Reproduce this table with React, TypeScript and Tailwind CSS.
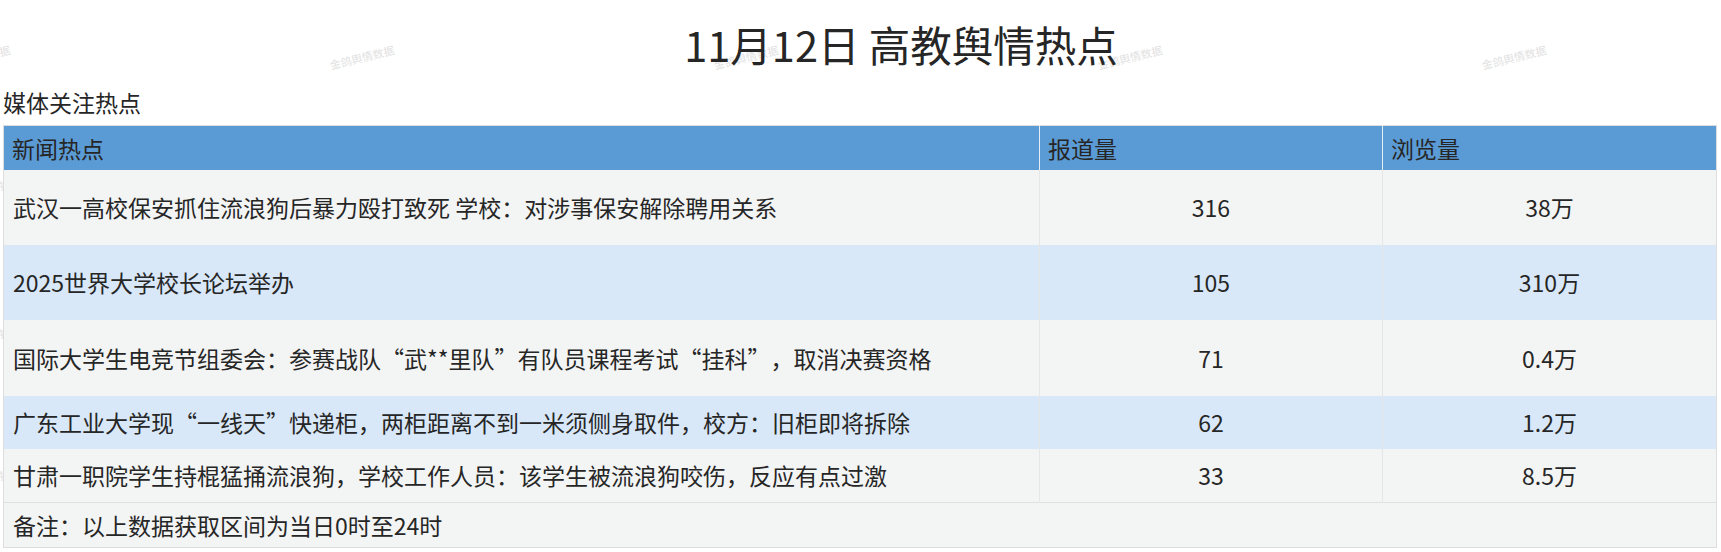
import React from 'react';

const rows = [
  { title: '武汉一高校保安抓住流浪狗后暴力殴打致死 学校：对涉事保安解除聘用关系', reports: '316', views: '38万', h: 'h-[75px]', bg: 'bg-[#f3f4f4]' },
  { title: '2025世界大学校长论坛举办', reports: '105', views: '310万', h: 'h-[75px]', bg: 'bg-[#d9e8f8]' },
  { title: '国际大学生电竞节组委会：参赛战队“武**里队”有队员课程考试“挂科”，取消决赛资格', reports: '71', views: '0.4万', h: 'h-[76px]', bg: 'bg-[#f3f4f4]' },
  { title: '广东工业大学现“一线天”快递柜，两柜距离不到一米须侧身取件，校方：旧柜即将拆除', reports: '62', views: '1.2万', h: 'h-[53px]', bg: 'bg-[#d9e8f8]' },
  { title: '甘肃一职院学生持棍猛捅流浪狗，学校工作人员：该学生被流浪狗咬伤，反应有点过激', reports: '33', views: '8.5万', h: 'h-[54px]', bg: 'bg-[#f3f4f4]' },
];

const marks = [
  { left: -55, top: 52 },
  { left: 329, top: 52 },
  { left: 713, top: 52 },
  { left: 1097, top: 52 },
  { left: 1481, top: 52 },
  { left: -55, top: 186 },
  { left: -55, top: 334 },
  { left: -55, top: 476 },
];

// curly quotes take a full em in the original font
const withWideQuotes = (text: string) =>
  text.split(/([“”])/).map((part, i) =>
    part === '“' ? (
      <span key={i} className="inline-block w-[1em] text-right">
        {part}
      </span>
    ) : part === '”' ? (
      <span key={i} className="inline-block w-[1em] text-left">
        {part}
      </span>
    ) : (
      part
    )
  );

const App: React.FC = () => {
  return (
    <div
      className="relative w-[1721px] h-[552px] bg-white overflow-hidden text-[#262626]"
      style={{ fontFamily: '"Noto Sans CJK SC", "Noto Sans", sans-serif' }}
    >
      {/* watermark */}
      <div className="absolute inset-0 pointer-events-none">
        {marks.map((m, i) => (
          <span
            key={i}
            className="absolute text-[11px] leading-none text-[#e2e2e2] -rotate-[14deg] whitespace-nowrap"
            style={{ left: m.left, top: m.top }}
          >
            金鸽舆情数据
          </span>
        ))}
      </div>

      <div className="relative flex flex-col pt-[20px] pl-[3px] pr-[4px]">
        <h1 className="pl-[82px] text-center text-[41.5px] leading-[48px] font-normal">11月12日 高教舆情热点</h1>
        <div className="mt-[20px] text-[23px] leading-[28px]">媒体关注热点</div>

        <table className="mt-[9px] w-full table-fixed border-collapse border border-[#dddddd] text-[23px] leading-[28px]">
          <colgroup>
            <col className="w-[1036px]" />
            <col className="w-[343px]" />
            <col />
          </colgroup>
          <thead>
            <tr className="h-[44px] bg-[#5b9bd5]">
              <th className="px-[8px] text-left font-normal">新闻热点</th>
              <th className="px-[8px] text-left font-normal border-l border-[#e8eef5]">报道量</th>
              <th className="px-[8px] text-left font-normal border-l border-[#e8eef5]">浏览量</th>
            </tr>
          </thead>
          <tbody>
            {rows.map((r) => (
              <tr key={r.reports} className={r.h + ' ' + r.bg}>
                <td className="px-[9px] text-left">{withWideQuotes(r.title)}</td>
                <td className="px-[8px] text-center border-l border-[#e6e6e6]">{r.reports}</td>
                <td className="px-[8px] text-center border-l border-[#e6e6e6]">{r.views}</td>
              </tr>
            ))}
            <tr className="h-[45px] bg-[#f3f4f4]">
              <td colSpan={3} className="px-[9px] text-left border-t border-[#e0e0e0]">
                备注：以上数据获取区间为当日0时至24时
              </td>
            </tr>
          </tbody>
        </table>
      </div>
    </div>
  );
};

export default App;
